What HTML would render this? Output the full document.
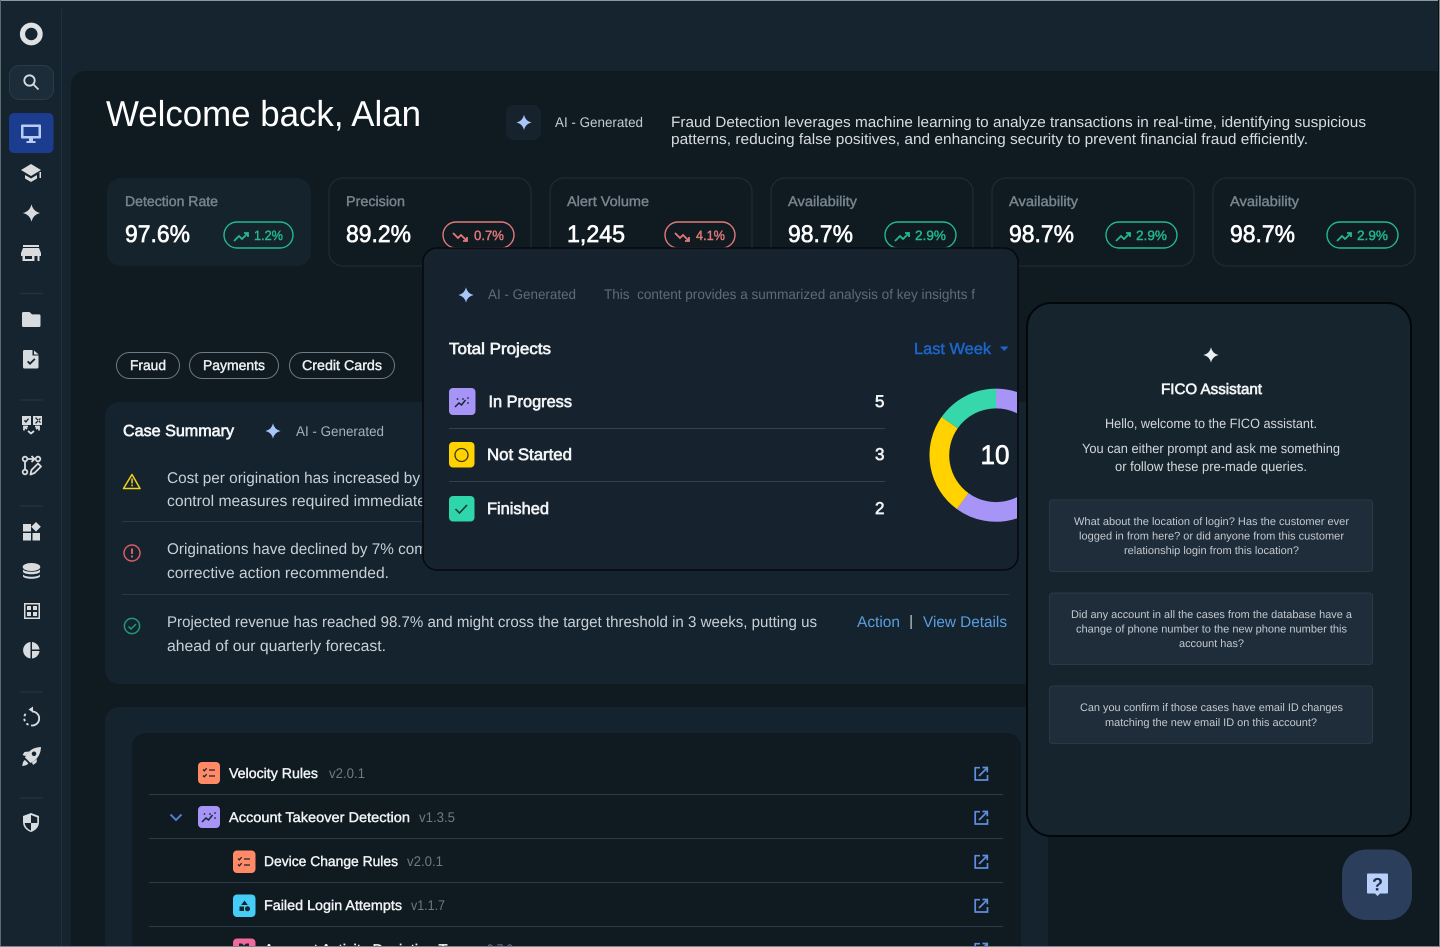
<!DOCTYPE html>
<html lang="en"><head><meta charset="utf-8"><title>Welcome back, Alan</title>
<style>
html,body{margin:0;padding:0;background:#16242f;width:1440px;height:947px;overflow:hidden}
svg{display:block;position:absolute;left:0;top:0}
text{font-family:"Liberation Sans",sans-serif;text-rendering:geometricPrecision;white-space:pre}
.m{stroke:currentColor;stroke-width:.42}
.b{stroke:currentColor;stroke-width:.65}
</style></head><body>
<svg width="1440" height="947" viewBox="0 0 1440 947" xmlns="http://www.w3.org/2000/svg">
<defs>
<path id="st" d="M0-10Q1.800-1.800 10 0 1.800 1.800 0 10-1.800 1.800-10 0-1.800-1.800 0-10Z"/>
<path id="up" d="M0 7 5 2l3 3 6-6M10-1h4v4" fill="none" stroke-width="1.800"/>
<path id="dn" d="M0-1 5 4l3-3 6 6M10 7h4V3" fill="none" stroke-width="1.800"/>
<g id="ext" fill="none" stroke="#5f8ee0" stroke-width="1.700"><path d="M-1-5.800H-5.800V6.500H6.500V1.500"/><path d="M-2 2.500 6-5.500M1.500-6H6.300v4.800"/></g>
<g id="chk" fill="none" stroke="#1a2530" stroke-width="1.300"><path d="M-6-3.500l1.300 1.300 2.400-2.600M-6 2.500l1.300 1.300 2.400-2.600"/><path d="M0-3H6M0 3H6"/></g>
<g id="trd" fill="none" stroke="#1a2530" stroke-width="1.500"><path d="M-7 5-3 1-.5 3 3.500-2"/><circle cx="-4.500" cy="-3" r=".9" fill="#1a2530" stroke="none"/><circle cx="1" cy="-3" r=".9" fill="#1a2530" stroke="none"/><circle cx="6" cy="-4" r=".9" fill="#1a2530" stroke="none"/><circle cx="6" cy="1" r=".9" fill="#1a2530" stroke="none"/></g>
<clipPath id="dc"><rect x="920" y="380" width="97" height="150"/></clipPath>
</defs>

<rect width="1440" height="947" fill="#16242f"/>
<rect x="61" y="9" width="1" height="938" fill="#1f2f3b"/>
<path d="M71 947V85a14 14 0 0 1 14-14H1438V947Z" fill="#0f1a21"/>

<!-- sidebar -->
<circle cx="31.300" cy="34" r="8.800" fill="none" stroke="#dfe2e4" stroke-width="5.200"/>
<rect x="9.500" y="65.500" width="44" height="34" rx="10" fill="#1d2c39" stroke="#2b3b48"/>
<g fill="none" stroke="#d8dcdf" stroke-width="1.800"><circle cx="29.500" cy="80.500" r="5.200"/><path d="M33.500 84.500l5 5"/></g>
<rect x="9" y="113" width="44.500" height="40" rx="5" fill="#1c3d8f"/>
<g fill="#b7cdf6"><path fill-rule="evenodd" d="M22 124.500h18a1 1 0 0 1 1 1v12a1 1 0 0 1-1 1H22a1 1 0 0 1-1-1v-12a1 1 0 0 1 1-1ZM23.500 127v9h15v-9Z"/><path d="M29 138.500h4v2.500h2.500v2h-9v-2H29Z"/></g>
<g fill="#d8dcdf">
<path d="M31 164 41 170 31 176 21 170ZM25 175l6 3.500 6-3.500v3.500l-6 3.500-6-3.500ZM39.500 172h1.500v6h-1.500Z"/>
<use href="#st" transform="translate(31.500 213) scale(.88)"/>
<path fill-rule="evenodd" d="M23 245H39v2H23ZM23 248H39L41 253v3H39.500V261H22.500V256H21V253ZM25 256v3h7v-3ZM34.500 256v5h3v-5Z"/>
<path d="M23.500 312h5.500a1.500 1.500 0 0 1 1 .4l2 2h7a1.500 1.500 0 0 1 1.500 1.500v9.600a1.500 1.500 0 0 1-1.500 1.500h-15.500a1.500 1.500 0 0 1-1.500-1.500v-12a1.500 1.500 0 0 1 1.500-1.500Z"/>
<path fill-rule="evenodd" d="M24.500 350h8v5.500h6V367a1.500 1.500 0 0 1-1.500 1.500H24.500a1.500 1.500 0 0 1-1.500-1.500V351.500a1.500 1.500 0 0 1 1.500-1.500ZM27 362l3 3 5.500-5.500-1.300-1.300-4.200 4.200-1.700-1.700Z"/>
<path d="M34 350.500l4.700 4H34Z"/>
<path fill-rule="evenodd" d="M22 416h9v9h-9ZM33 416h9v9h-9ZM24 421l2 2 3-4-1-.8-2 2.600-1.200-1Z M35 418l5 5 1-.8-5-5Z M40 418l-5 5 1 .8 5-5Z"/>
<path d="M23 533h8v7.500h-8ZM23 524h8v7.500h-8ZM32.500 533h7.500v7.500h-7.500ZM36 522l4.800 4.800-4.800 4.800-4.800-4.800Z"/>
<ellipse cx="31.500" cy="567" rx="8.800" ry="4"/>
<path d="M23 569.500c2 3 15 3 17 0v2.500c-2 3-15 3-17 0ZM23 574.500c2 3 15 3 17 0v2c-2 3-15 3-17 0Z"/>
<path fill-rule="evenodd" d="M24 603h16v16H24ZM25.500 604.500v13h13v-13ZM27 606h4v4h-4ZM33 606h4v4h-4ZM27 612h4v4h-4ZM33 612h4v4h-4Z"/>
<path d="M30.500 642v16.500a8.300 8.300 0 0 1 0-16.500ZM32 642a8.300 8.300 0 0 1 7.500 7.500H32ZM32 651h7.500a8.300 8.300 0 0 1-7.500 7.500Z"/>
<path fill-rule="evenodd" d="M41 747c-6.500 .3-11.500 2.700-15 8.500l-1 2 5.500 5.500 2-1c5.700-3.500 8.200-8.500 8.500-15ZM34 751.500a2.300 2.300 0 1 1 0 4.600 2.300 2.300 0 0 1 0-4.600Z"/>
<path d="M29 751.500l-4.500 .5-2 3 3 1ZM37 759l-.5 3.500-3.500 2.500-1-2.500ZM25 760c-1.500 .5-2.500 3-2.700 6 3-.2 5.500-1.200 6-2.700Z"/>
<path fill-rule="evenodd" d="M31 813l8 3v6c0 5-3.500 8.500-8 10-4.500-1.500-8-5-8-10v-6ZM31 815v8h6.300v-5.500ZM31 823h-6.300c.4 3.500 3 6.300 6.300 7.500Z"/>
</g>
<g fill="none" stroke="#d8dcdf" stroke-width="1.800">
<path d="M27 429l-3-2.500M24 430.500v-4h4M36 429l3-2.500M39 430.500v-4h-4M28 431l3 2.500 3-2.500"/>
<circle cx="25" cy="459" r="2.300"/><circle cx="25" cy="472" r="2.300"/><circle cx="38" cy="459" r="2.300"/>
<path d="M25 462v7.500M28 459h6M31.500 456l3 3-3 3"/>
<path d="M30.500 474.500l1-4.500 6.500-6.500 3 3-6.500 6.500Z" stroke-linejoin="round"/>
<path d="M32 711.500a7 7 0 1 1-1 13.900"/>
<path d="M28.500 724.800a7 7 0 0 1-2-1.400M24.900 721.200a7 7 0 0 1-.6-2.500M24.400 716.200a7 7 0 0 1 1.200-2.400" stroke-width="1.900"/>
</g>
<path d="M33 706.500v6l-4.500-3Z" fill="#d8dcdf"/>
<g stroke="#24333f" stroke-width="1.300"><path d="M20 293.500h23M20 400h23M20 506h23M20 692h23M20 798h23"/></g>

<!-- heading -->
<text x="106" y="126" font-size="36" fill="#fff" textLength="315" lengthAdjust="spacingAndGlyphs">Welcome back, Alan</text>
<rect x="506" y="105" width="35" height="35" rx="8" fill="#16232d"/>
<use href="#st" transform="translate(524 122.500) scale(.76)" fill="#a9c6fb"/>
<text x="555" y="127" font-size="14" fill="#c3cbd1" textLength="88" lengthAdjust="spacingAndGlyphs">AI - Generated</text>
<text x="671" y="127" font-size="15" fill="#d7dde1" textLength="695" lengthAdjust="spacingAndGlyphs">Fraud Detection leverages machine learning to analyze transactions in real-time, identifying suspicious</text>
<text x="671" y="144" font-size="15" fill="#d7dde1" textLength="637" lengthAdjust="spacingAndGlyphs">patterns, reducing false positives, and enhancing security to prevent financial fraud efficiently.</text>

<!-- KPI -->
<rect x="107" y="178" width="204" height="88" rx="14" fill="#15232c"/>
<text class="m" x="125" y="206" font-size="14" fill="#77858f" color="#77858f" textLength="93" lengthAdjust="spacingAndGlyphs">Detection Rate</text>
<text class="b" x="125" y="242" font-size="24" fill="#fff" color="#fff" textLength="65" lengthAdjust="spacingAndGlyphs">97.6%</text>
<rect x="224" y="222" width="69" height="26" rx="13" fill="none" stroke="#22b98f" stroke-width="1.400"/>
<use href="#up" x="234" y="234" stroke="#22b98f"/>
<text class="m" x="254" y="240" font-size="13.500" fill="#22b98f" color="#22b98f" textLength="29" lengthAdjust="spacingAndGlyphs">1.2%</text>

<g fill="none" stroke="#1e2b35" stroke-width="1.300">
<rect x="329" y="178" width="202" height="88" rx="14"/><rect x="550" y="178" width="202" height="88" rx="14"/><rect x="771" y="178" width="202" height="88" rx="14"/><rect x="992" y="178" width="202" height="88" rx="14"/><rect x="1213" y="178" width="202" height="88" rx="14"/>
</g>
<text class="m" x="346" y="206" font-size="14" fill="#77858f" color="#77858f" textLength="59" lengthAdjust="spacingAndGlyphs">Precision</text>
<text class="m" x="567" y="206" font-size="14" fill="#77858f" color="#77858f" textLength="82" lengthAdjust="spacingAndGlyphs">Alert Volume</text>
<text class="m" x="788" y="206" font-size="14" fill="#77858f" color="#77858f" textLength="69" lengthAdjust="spacingAndGlyphs">Availability</text>
<text class="m" x="1009" y="206" font-size="14" fill="#77858f" color="#77858f" textLength="69" lengthAdjust="spacingAndGlyphs">Availability</text>
<text class="m" x="1230" y="206" font-size="14" fill="#77858f" color="#77858f" textLength="69" lengthAdjust="spacingAndGlyphs">Availability</text>
<text class="b" x="346" y="242" font-size="24" fill="#fff" color="#fff" textLength="65" lengthAdjust="spacingAndGlyphs">89.2%</text>
<text class="b" x="567" y="242" font-size="24" fill="#fff" color="#fff" textLength="58" lengthAdjust="spacingAndGlyphs">1,245</text>
<text class="b" x="788" y="242" font-size="24" fill="#fff" color="#fff" textLength="65" lengthAdjust="spacingAndGlyphs">98.7%</text>
<text class="b" x="1009" y="242" font-size="24" fill="#fff" color="#fff" textLength="65" lengthAdjust="spacingAndGlyphs">98.7%</text>
<text class="b" x="1230" y="242" font-size="24" fill="#fff" color="#fff" textLength="65" lengthAdjust="spacingAndGlyphs">98.7%</text>
<g fill="none" stroke-width="1.400">
<rect x="443" y="222" width="71" height="26" rx="13" stroke="#e2797b"/><rect x="665" y="222" width="70" height="26" rx="13" stroke="#e2797b"/>
<rect x="885" y="222" width="71" height="26" rx="13" stroke="#22b98f"/><rect x="1106" y="222" width="71" height="26" rx="13" stroke="#22b98f"/><rect x="1327" y="222" width="71" height="26" rx="13" stroke="#22b98f"/>
</g>
<use href="#dn" x="453" y="234" stroke="#e2797b"/><use href="#dn" x="675" y="234" stroke="#e2797b"/>
<use href="#up" x="895" y="234" stroke="#22b98f"/><use href="#up" x="1116" y="234" stroke="#22b98f"/><use href="#up" x="1337" y="234" stroke="#22b98f"/>
<text class="m" x="474" y="240" font-size="13.500" fill="#e2797b" color="#e2797b" textLength="30" lengthAdjust="spacingAndGlyphs">0.7%</text>
<text class="m" x="696" y="240" font-size="13.500" fill="#e2797b" color="#e2797b" textLength="29" lengthAdjust="spacingAndGlyphs">4.1%</text>
<text class="m" x="915" y="240" font-size="13.500" fill="#22b98f" color="#22b98f" textLength="31" lengthAdjust="spacingAndGlyphs">2.9%</text>
<text class="m" x="1136" y="240" font-size="13.500" fill="#22b98f" color="#22b98f" textLength="31" lengthAdjust="spacingAndGlyphs">2.9%</text>
<text class="m" x="1357" y="240" font-size="13.500" fill="#22b98f" color="#22b98f" textLength="31" lengthAdjust="spacingAndGlyphs">2.9%</text>

<!-- chips -->
<g fill="none" stroke="#6f7a83" stroke-width="1"><rect x="116.500" y="352.500" width="63" height="26" rx="13"/><rect x="189.500" y="352.500" width="89" height="26" rx="13"/><rect x="289.500" y="352.500" width="105" height="26" rx="13"/></g>
<text class="m" x="130" y="370" font-size="14" fill="#eef1f3" color="#eef1f3" textLength="36" lengthAdjust="spacingAndGlyphs">Fraud</text>
<text class="m" x="203" y="370" font-size="14" fill="#eef1f3" color="#eef1f3" textLength="62" lengthAdjust="spacingAndGlyphs">Payments</text>
<text class="m" x="302" y="370" font-size="14" fill="#eef1f3" color="#eef1f3" textLength="80" lengthAdjust="spacingAndGlyphs">Credit Cards</text>

<!-- case summary -->
<rect x="105" y="402" width="940" height="282" rx="14" fill="#15232e"/>
<text class="b" x="123" y="436" font-size="16" fill="#f4f6f7" color="#f4f6f7" textLength="111" lengthAdjust="spacingAndGlyphs">Case Summary</text>
<use href="#st" transform="translate(273 431) scale(.76)" fill="#a9c6fb"/>
<text x="296" y="436" font-size="14" fill="#a7b0b8" textLength="88" lengthAdjust="spacingAndGlyphs">AI - Generated</text>
<path d="M132 474.500 140 488.500H123.500Z" fill="none" stroke="#f2d21b" stroke-width="1.500" stroke-linejoin="round"/><path d="M131.300 478.500h1.500v5h-1.500ZM131.300 484.500h1.500v1.700h-1.500Z" fill="#f2d21b"/>
<text x="167" y="483" font-size="15.500" fill="#c8d0d6" textLength="253" lengthAdjust="spacingAndGlyphs">Cost per origination has increased by</text>
<text x="167" y="506" font-size="15.500" fill="#c8d0d6" textLength="259" lengthAdjust="spacingAndGlyphs">control measures required immediate</text>
<path d="M122 521.500H1009M122 594.500H1009" stroke="#2a3843" stroke-width="1"/>
<circle cx="132" cy="553" r="8" fill="none" stroke="#d95c63" stroke-width="1.500"/><path d="M131 548.500h2v5.500h-2ZM131 555.500h2v2h-2Z" fill="#d95c63"/>
<text x="167" y="554" font-size="15.500" fill="#c8d0d6" textLength="260" lengthAdjust="spacingAndGlyphs">Originations have declined by 7% com</text>
<text x="167" y="578" font-size="15.500" fill="#c8d0d6" textLength="222" lengthAdjust="spacingAndGlyphs">corrective action recommended.</text>
<circle cx="132" cy="626" r="7.600" fill="none" stroke="#1f9a78" stroke-width="1.500"/><path d="M128.500 626.500l2.500 2.500 5-5" fill="none" stroke="#1f9a78" stroke-width="1.500"/>
<text x="167" y="627" font-size="15.500" fill="#c8d0d6" textLength="650" lengthAdjust="spacingAndGlyphs">Projected revenue has reached 98.7% and might cross the target threshold in 3 weeks, putting us</text>
<text x="167" y="651" font-size="15.500" fill="#c8d0d6" textLength="219" lengthAdjust="spacingAndGlyphs">ahead of our quarterly forecast.</text>
<text x="857" y="627" font-size="15.500" fill="#5a9ee0" textLength="43" lengthAdjust="spacingAndGlyphs">Action</text>
<rect x="910.500" y="615" width="1.200" height="14" fill="#c8d0d6"/>
<text x="923" y="627" font-size="15.500" fill="#5a9ee0" textLength="84" lengthAdjust="spacingAndGlyphs">View Details</text>

<!-- table card -->
<path d="M105 947V721a14 14 0 0 1 14-14H1034a14 14 0 0 1 14 14V947Z" fill="#15232e"/>
<path d="M132 947V747a14 14 0 0 1 14-14H1007a14 14 0 0 1 14 14V947Z" fill="#0f1a21"/>
<path d="M149 794.500H1003M149 838.500H1003M149 882.500H1003M149 926.500H1003" stroke="#2b3843" stroke-width="1.200"/>
<rect x="198" y="762" width="22" height="22" rx="4" fill="#ff8a65"/><use href="#chk" x="209" y="773"/>
<text class="m" x="229" y="778" font-size="14" fill="#f1f3f5" color="#f1f3f5" textLength="89" lengthAdjust="spacingAndGlyphs">Velocity Rules</text>
<text x="329" y="778" font-size="14" fill="#6d7a84" textLength="36" lengthAdjust="spacingAndGlyphs">v2.0.1</text>
<path d="M170.500 814.500 176 820l5.500-5.500" fill="none" stroke="#4f7bd0" stroke-width="2"/>
<rect x="198" y="806" width="22" height="22" rx="4" fill="#a694f7"/><use href="#trd" x="209" y="817"/>
<text class="m" x="229" y="822" font-size="14" fill="#f1f3f5" color="#f1f3f5" textLength="181" lengthAdjust="spacingAndGlyphs">Account Takeover Detection</text>
<text x="419" y="822" font-size="14" fill="#6d7a84" textLength="36" lengthAdjust="spacingAndGlyphs">v1.3.5</text>
<rect x="233" y="850.500" width="22.500" height="22.500" rx="4" fill="#ff8a65"/><use href="#chk" x="244" y="862"/>
<text class="m" x="264" y="866" font-size="14" fill="#f1f3f5" color="#f1f3f5" textLength="134" lengthAdjust="spacingAndGlyphs">Device Change Rules</text>
<text x="407" y="866" font-size="14" fill="#6d7a84" textLength="36" lengthAdjust="spacingAndGlyphs">v2.0.1</text>
<rect x="233" y="894.500" width="22.500" height="22.500" rx="4" fill="#45cdf7"/>
<path d="M244.500 900.500l3.300 4.500h-6.600Z" fill="#172530"/><rect x="239.500" y="906.500" width="4.500" height="4.500" fill="#172530"/><circle cx="247.500" cy="908.800" r="2.500" fill="#172530"/>
<text class="m" x="264" y="910" font-size="14" fill="#f1f3f5" color="#f1f3f5" textLength="138" lengthAdjust="spacingAndGlyphs">Failed Login Attempts</text>
<text x="411" y="910" font-size="14" fill="#6d7a84" textLength="34" lengthAdjust="spacingAndGlyphs">v1.1.7</text>
<rect x="233" y="938.500" width="22.500" height="22.500" rx="4" fill="#f06a9b"/>
<path d="M239 943.500h3l2 2 2-2h3v3h-10Z" fill="#172530"/>
<text class="m" x="264" y="954" font-size="14" fill="#f1f3f5" color="#f1f3f5" textLength="206" lengthAdjust="spacingAndGlyphs">Account Activity Deviation Tags</text>
<text x="481" y="954" font-size="14" fill="#6d7a84" textLength="32" lengthAdjust="spacingAndGlyphs">v0.7.0</text>
<use href="#ext" x="981" y="773.500"/><use href="#ext" x="981" y="817.500"/><use href="#ext" x="981" y="861.500"/><use href="#ext" x="981" y="905.500"/><use href="#ext" x="981" y="949.500"/>

<!-- projects popup -->
<rect x="423" y="248" width="595" height="322" rx="14" fill="#16232e" stroke="#05090c" stroke-width="1.500"/>
<use href="#st" transform="translate(466 295) scale(.76)" fill="#a9c6fb"/>
<text x="488" y="299" font-size="14" fill="#5f6c76" textLength="88" lengthAdjust="spacingAndGlyphs">AI - Generated</text>
<text x="604" y="299" font-size="14" fill="#5f6c76" textLength="371" lengthAdjust="spacingAndGlyphs">This  content provides a summarized analysis of key insights f</text>
<text class="b" x="449" y="354" font-size="16" fill="#f1f3f5" color="#f1f3f5" textLength="102" lengthAdjust="spacingAndGlyphs">Total Projects</text>
<text class="m" x="914" y="354" font-size="16" fill="#1d66cc" color="#1d66cc" textLength="77" lengthAdjust="spacingAndGlyphs">Last Week</text>
<path d="M1000 346.500h8.500l-4.250 4.500Z" fill="#1d66cc"/>
<rect x="449" y="388" width="26.500" height="27" rx="4" fill="#a694f7"/><use href="#trd" x="462" y="402"/>
<text class="b" x="488.500" y="407" font-size="16.500" fill="#f1f3f5" color="#f1f3f5" textLength="83.500" lengthAdjust="spacingAndGlyphs">In Progress</text>
<text class="b" x="875" y="407" font-size="17" fill="#f1f3f5" color="#f1f3f5">5</text>
<path d="M449 428.500H885M449 481.500H885" stroke="#33424e" stroke-width="1"/>
<rect x="449" y="442" width="25.500" height="25.500" rx="4" fill="#ffd200"/><circle cx="461.500" cy="455" r="6.500" fill="none" stroke="#3b3a14" stroke-width="1.300"/>
<text class="b" x="487" y="460" font-size="16.500" fill="#f1f3f5" color="#f1f3f5" textLength="85" lengthAdjust="spacingAndGlyphs">Not Started</text>
<text class="b" x="875" y="460" font-size="17" fill="#f1f3f5" color="#f1f3f5">3</text>
<rect x="449" y="496" width="25.500" height="25.500" rx="4" fill="#2fd6ab"/><path d="M455.500 509l4 4 7.500-8" fill="none" stroke="#14312d" stroke-width="1.500"/>
<text class="b" x="487" y="514" font-size="16.500" fill="#f1f3f5" color="#f1f3f5" textLength="62" lengthAdjust="spacingAndGlyphs">Finished</text>
<text class="b" x="875" y="514" font-size="17" fill="#f1f3f5" color="#f1f3f5">2</text>
<g clip-path="url(#dc)" fill="none" stroke-width="19.700">
<path d="M996 398.500A56.700 56.700 0 1 1 962.700 501.100" stroke="#a694f7"/>
<path d="M962.700 501.100A56.700 56.700 0 0 1 949.600 422.700" stroke="#ffd200"/>
<path d="M949.600 422.700A56.700 56.700 0 0 1 996 398.500" stroke="#35d7ab"/>
</g>
<text class="b" x="980.500" y="464" font-size="27" fill="#fff" color="#fff" textLength="29" lengthAdjust="spacingAndGlyphs">10</text>

<!-- assistant -->
<rect x="1027" y="303" width="384" height="533" rx="24" fill="#16242e" stroke="#02070a" stroke-width="2"/>
<use href="#st" transform="translate(1211 355) scale(.76)" fill="#eceff1"/>
<text class="b" x="1161" y="394" font-size="15" fill="#f1f3f5" color="#f1f3f5" textLength="101" lengthAdjust="spacingAndGlyphs">FICO Assistant</text>
<text x="1105" y="428" font-size="13.500" fill="#d2d7db" textLength="212" lengthAdjust="spacingAndGlyphs">Hello, welcome to the FICO assistant.</text>
<text x="1082" y="453" font-size="13.500" fill="#d2d7db" textLength="258" lengthAdjust="spacingAndGlyphs">You can either prompt and ask me something</text>
<text x="1115" y="471" font-size="13.500" fill="#d2d7db" textLength="192" lengthAdjust="spacingAndGlyphs">or follow these pre-made queries.</text>
<g fill="#1f2d3b" stroke="#2a3947"><rect x="1049.500" y="500" width="323" height="71.500" rx="3"/><rect x="1049.500" y="593" width="323" height="71.500" rx="3"/><rect x="1049.500" y="686" width="323" height="57.500" rx="3"/></g>
<g font-size="11" fill="#c3c9ce">
<text x="1074" y="525" textLength="275" lengthAdjust="spacingAndGlyphs">What about the location of login? Has the customer ever</text>
<text x="1079" y="539.500" textLength="265" lengthAdjust="spacingAndGlyphs">logged in from here? or did anyone from this customer</text>
<text x="1124" y="554" textLength="175" lengthAdjust="spacingAndGlyphs">relationship login from this location?</text>
<text x="1071" y="618" textLength="281" lengthAdjust="spacingAndGlyphs">Did any account in all the cases from the database have a</text>
<text x="1076" y="632.500" textLength="271" lengthAdjust="spacingAndGlyphs">change of phone number to the new phone number this</text>
<text x="1179" y="647" textLength="65" lengthAdjust="spacingAndGlyphs">account has?</text>
<text x="1080" y="711" textLength="263" lengthAdjust="spacingAndGlyphs">Can you confirm if those cases have email ID changes</text>
<text x="1105" y="726" textLength="212" lengthAdjust="spacingAndGlyphs">matching the new email ID on this account?</text>
</g>
<rect x="1342" y="849.500" width="70" height="70.500" rx="24" fill="#2b3f5c"/>
<path d="M1368 873.500h19a1 1 0 0 1 1 1v18a1 1 0 0 1-1 1h-7l-2.500 2.500-2.500-2.500h-7a1 1 0 0 1-1-1v-18a1 1 0 0 1 1-1Z" fill="#b9d0fb"/>
<text x="1377.500" y="890.500" font-size="18" font-weight="bold" fill="#1f2f47" text-anchor="middle">?</text>

<!-- edges -->
<rect x="0" y="0" width="1440" height="1" fill="#8d979d"/>
<rect x="0" y="0" width="1" height="947" fill="#5b6a73"/>
<rect x="1438" y="0" width="1" height="947" fill="#0a1115"/>
<rect x="1439" y="0" width="1" height="947" fill="#7a858b"/>
<rect x="0" y="946" width="1440" height="1" fill="#7a858b"/>
</svg>
</body></html>
